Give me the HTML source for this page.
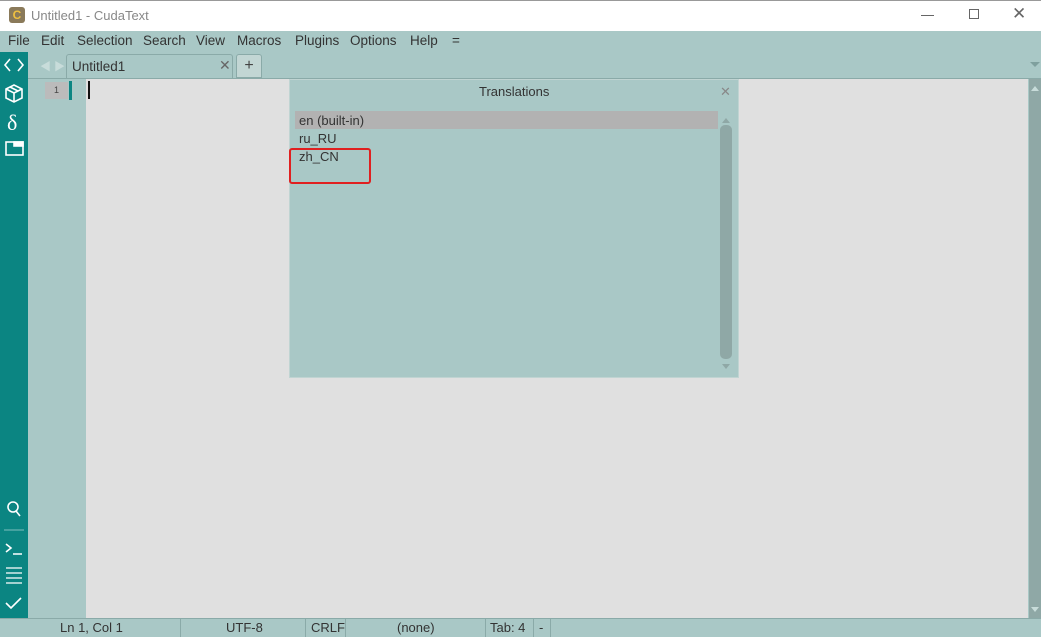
<!DOCTYPE html>
<html><head><style>
*{margin:0;padding:0;box-sizing:border-box}
body{width:1041px;height:637px;position:relative;overflow:hidden;font-family:"Liberation Sans","Noto Sans CJK SC",sans-serif;background:#a9c8c6;font-size:13px;color:#333}
.a{position:absolute}
.m span{position:absolute;top:0}
</style></head><body>
<div class="a" style="left:0;top:0;width:1041px;height:31px;background:#fff;border-top:1px solid #999"></div>
<div class="a" style="left:9px;top:7px;width:16px;height:16px;background:#8a7a5a;border-radius:3px;color:#f0c040;font-size:12px;font-weight:bold;text-align:center;line-height:16px">C</div>
<div class="a" style="left:31px;top:8px;color:#888;font-size:13px">Untitled1 - CudaText</div>
<div class="a" style="left:921px;top:15px;width:13px;height:1px;background:#666"></div>
<div class="a" style="left:969px;top:9px;width:10px;height:10px;border:1px solid #666"></div>
<div class="a" style="left:1012px;top:4px;color:#666;font-size:17px">✕</div>
<div class="a m" style="left:0;top:33px;width:1041px;height:18px;font-size:13.5px;color:#333">
<span style="left:8px">File</span><span style="left:41px">Edit</span><span style="left:77px">Selection</span><span style="left:143px">Search</span><span style="left:196px">View</span><span style="left:237px">Macros</span><span style="left:295px">Plugins</span><span style="left:350px">Options</span><span style="left:410px">Help</span><span style="left:452px">=</span>
</div>
<!-- sidebar -->
<div class="a" style="left:0;top:52px;width:28px;height:566px;background:#0b8582"></div>
<svg class="a" style="left:0;top:52px" width="28" height="566" fill="none" stroke="#fff" stroke-width="1.6">
<path d="M10 7l-5 6 5 6M18 7l5 6-5 6"/>
<path d="M6 37l8-4 8 4v9l-8 4-8-4zM6 37l8 4 8-4M14 41v9M10 35l8 4"/>
<text x="7" y="78" fill="#fff" stroke="none" font-size="22" font-family="Liberation Serif">δ</text>
<rect x="6" y="90" width="17" height="13"/><rect x="14" y="90" width="9" height="4" fill="#fff"/>
<circle cx="13" cy="455" r="5"/><path d="M16 459l4 5"/>
<path d="M4 478h20" stroke="#7fc0bd" stroke-width="1"/>
<path d="M6 492l5 4-5 4M13 502h9"/>
<path d="M6 516h16M6 521h16M6 526h16M6 531h16" stroke-width="1.3"/>
<path d="M6 551l5 5 10-10"/>
</svg>
<!-- tabs -->
<div class="a" style="left:40px;top:58px;color:#c8dcda;font-size:11px">◀ ▶</div>
<div class="a" style="left:66px;top:54px;width:167px;height:25px;background:#a9c8c6;border:1px solid #8aaaa8;border-bottom:none;border-radius:3px 3px 0 0"></div>
<div class="a" style="left:72px;top:59px;color:#333;font-size:13.5px">Untitled1</div>
<div class="a" style="left:219px;top:57px;color:#666;font-size:14px">✕</div>
<div class="a" style="left:236px;top:54px;width:26px;height:24px;background:#c2d6d4;border:1px solid #8aaaa8;border-radius:3px 3px 0 0;text-align:center;font-size:16px;line-height:22px;color:#444">+</div>
<div class="a" style="left:1030px;top:62px;width:0;height:0;border:5px solid transparent;border-top:5px solid #7fa09e"></div>
<div class="a" style="left:28px;top:78px;width:1013px;height:1px;background:#8aaaa8"></div>
<!-- gutter/editor -->
<div class="a" style="left:45px;top:82px;width:23px;height:17px;background:#bbb;font-size:9px;text-align:center;line-height:17px;color:#444">1</div>
<div class="a" style="left:69px;top:81px;width:3px;height:19px;background:#0b8582"></div>
<div class="a" style="left:86px;top:79px;width:942px;height:539px;background:#e0e0e0"></div>
<div class="a" style="left:88px;top:81px;width:2px;height:18px;background:#111"></div>
<div class="a" style="left:1029px;top:79px;width:12px;height:539px;background:#8fa8a6"></div>
<div class="a" style="left:1031px;top:82px;border:4px solid transparent;border-bottom:5px solid #c8dcda"></div>
<div class="a" style="left:1031px;top:607px;border:4px solid transparent;border-top:5px solid #c8dcda"></div>
<!-- dialog -->
<div class="a" style="left:289px;top:79px;width:450px;height:299px;background:#a9c8c6;border:1px solid #c0d4d2"></div>
<div class="a" style="left:479px;top:84px;color:#333">Translations</div>
<div class="a" style="left:720px;top:84px;color:#888;font-size:13px">✕</div>
<div class="a" style="left:295px;top:111px;width:423px;height:18px;background:#b2b2b2"></div>
<div class="a" style="left:299px;top:113px">en (built-in)</div>
<div class="a" style="left:299px;top:131px">ru_RU</div>
<div class="a" style="left:299px;top:149px">zh_CN</div>
<div class="a" style="left:720px;top:125px;width:12px;height:234px;background:#8fa8a6;border-radius:5px"></div>
<div class="a" style="left:722px;top:114px;border:4px solid transparent;border-bottom:5px solid #8fa8a6"></div>
<div class="a" style="left:722px;top:364px;border:4px solid transparent;border-top:5px solid #8fa8a6"></div>
<div class="a" style="left:289px;top:148px;width:82px;height:36px;border:2px solid #e02020;border-radius:3px"></div>
<!-- status -->
<div class="a" style="left:0;top:618px;width:1041px;height:1px;background:#8aaaa8"></div>
<div class="a" style="top:620px;left:0;width:1041px;height:17px;font-size:13px;color:#333">
<span class="a" style="left:60px">Ln 1, Col 1</span>
<span class="a" style="left:180px;top:-2px;width:1px;height:19px;background:#8aaaa8"></span>
<span class="a" style="left:226px">UTF-8</span>
<span class="a" style="left:305px;top:-2px;width:1px;height:19px;background:#8aaaa8"></span>
<span class="a" style="left:311px">CRLF</span>
<span class="a" style="left:345px;top:-2px;width:1px;height:19px;background:#8aaaa8"></span>
<span class="a" style="left:397px">(none)</span>
<span class="a" style="left:485px;top:-2px;width:1px;height:19px;background:#8aaaa8"></span>
<span class="a" style="left:490px">Tab: 4</span>
<span class="a" style="left:533px;top:-2px;width:1px;height:19px;background:#8aaaa8"></span>
<span class="a" style="left:539px">-</span>
<span class="a" style="left:550px;top:-2px;width:1px;height:19px;background:#8aaaa8"></span>
</div>
</body></html>
